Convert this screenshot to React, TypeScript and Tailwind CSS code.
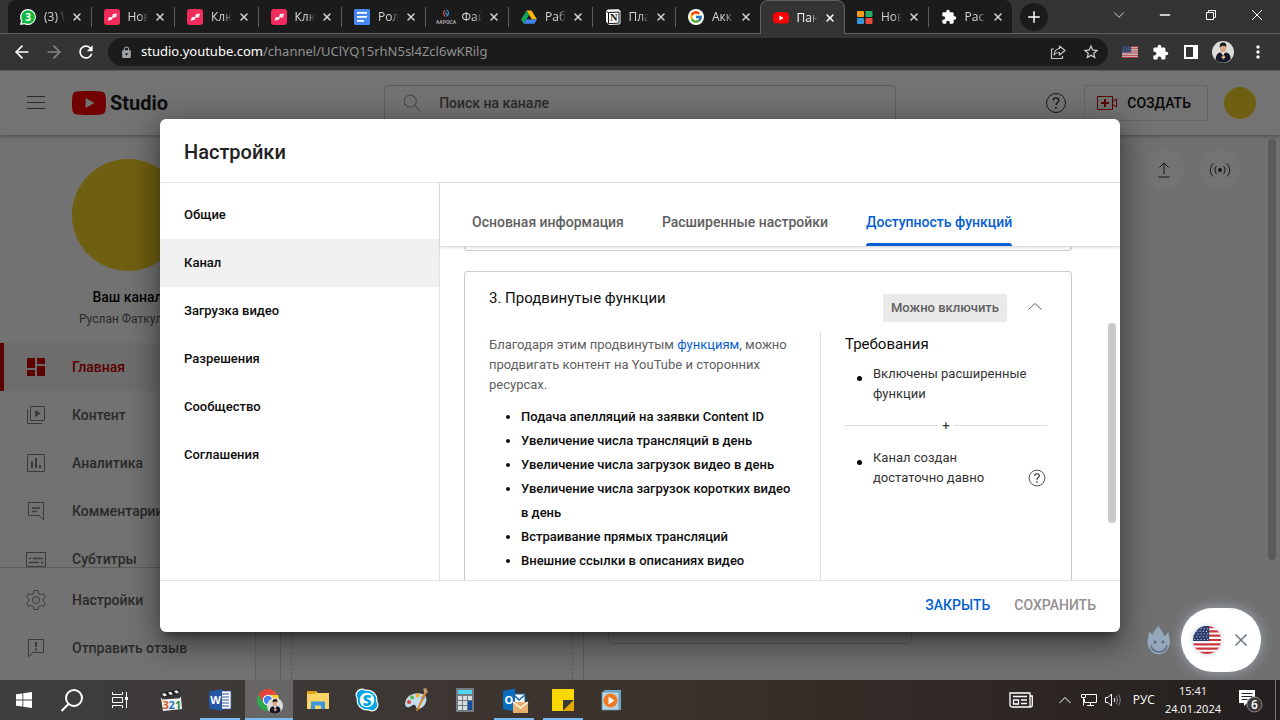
import { ReactNode } from 'react';
import { ArrowLeft, ArrowRight, ChevronDown, Minus, Plus, X } from 'lucide-react';
import { FcGoogle } from 'react-icons/fc';
import { MdExtension, MdLock, MdMoreVert, MdRefresh, MdStarBorder } from 'react-icons/md';
import clsx from 'clsx';

interface BrowserTab {
  title: string;
  icon: ReactNode;
  active?: boolean;
}

interface NavItem {
  label: string;
  icon: ReactNode;
  active?: boolean;
}

interface TaskApp {
  name: string;
  icon: ReactNode;
  running?: boolean;
  active?: boolean;
}

/* ---------- favicons ---------- */

const WhatsAppIcon = () => (
  <svg viewBox="0 0 16 16" className="size-4">
    <path d="M8 0a8 8 0 1 1-3.6 15.2L0 16l1-4.2A8 8 0 0 1 8 0z" fill="#fff" />
    <path d="M8 1.2a6.8 6.8 0 1 1-3.3 12.7l-2.9.6.7-2.8A6.8 6.8 0 0 1 8 1.2z" fill="#12b83c" />
    <text x="8" y="11.8" textAnchor="middle" fontSize="10" fontWeight="700" fontFamily="Open Sans, sans-serif" fill="#fff">3</text>
  </svg>
);

const PinkIcon = () => (
  <svg viewBox="0 0 16 16" className="size-4">
    <rect width="16" height="16" rx="3" fill="#f22b5d" />
    <path d="M3.500 11.500 5 8h3l1-3 4-.5-1 4H9l-1.500 2.500z" fill="#fff" opacity=".9" />
  </svg>
);

const DocsIcon = () => (
  <svg viewBox="0 0 16 16" className="size-4">
    <rect width="16" height="16" rx="1.5" fill="#4688f4" />
    <path d="M3 3h10v1.7H3zM3 7h10v1.7H3zM3 11h7v1.7H3z" fill="#fff" />
  </svg>
);

const RosaIcon = () => (
  <svg viewBox="0 0 16 16" className="size-4 overflow-visible">
    <path d="M7 1.500C5 2 5 6.500 7.500 7.500" stroke="#d9434d" strokeWidth="1.300" fill="none" />
    <path d="M8 1c3 .5 3.500 5 .5 6.500M7 3.500l3 3" stroke="#2c8fc9" strokeWidth="1.200" fill="none" />
    <text x="8" y="15" textAnchor="middle" fontSize="5" fontWeight="700" fontFamily="Roboto, sans-serif" fill="#a8a8a8">ААРОСА</text>
  </svg>
);

const DriveIcon = () => (
  <svg viewBox="0 0 16 16" className="size-4">
    <path d="M5.500 1.500h5L16 10.500h-5z" fill="#fbb50d" />
    <path d="M5.500 1.500 8.200 6 2.700 14.800 0 10.500z" fill="#12a15b" />
    <path d="M5.300 10.500H16l-2.700 4.300H2.700z" fill="#4285f4" />
  </svg>
);

const NotionIcon = () => (
  <svg viewBox="0 0 16 16" className="size-4">
    <path d="M1 2 3 .6l10.500-.3L15.500 2v12l-1.200 1.600L4 16l-3-3.500z" fill="#fff" />
    <path d="M3.500 3.500 14 3v11l-10.500.7z" fill="#fff" stroke="#111" strokeWidth="1" />
    <path d="M1.500 2.500 3.500 3.800" stroke="#111" />
    <text x="8.800" y="12.300" textAnchor="middle" fontSize="10" fontWeight="700" fontFamily="Liberation Serif, serif" fill="#111">N</text>
  </svg>
);

const YouTubeIcon = ({ className = 'h-4 w-4' }: { className?: string }) => (
  <svg viewBox="0 0 34 24" className={className}>
    <path d="M33.300 3.800A4.300 4.300 0 0 0 30.300.8C27.600 0 17 0 17 0S6.400 0 3.700.8A4.300 4.300 0 0 0 .7 3.800C0 6.400 0 12 0 12s0 5.600.7 8.200c.4 1.500 1.500 2.600 3 3C6.400 24 17 24 17 24s10.600 0 13.300-.8a4.300 4.300 0 0 0 3-3C34 17.600 34 12 34 12s0-5.600-.7-8.200z" fill="#f00" />
    <path d="M13.600 17.100 22.400 12l-8.800-5.100z" fill="#fff" />
  </svg>
);

const SquaresIcon = () => (
  <svg viewBox="0 0 16 16" className="size-4">
    <rect x="0" y="2" width="7" height="6" rx="1" fill="#f59b1a" />
    <rect x="8.500" y="2" width="7" height="6" rx="1" fill="#27ae60" />
    <rect x="0" y="9" width="7" height="6" rx="1" fill="#3498db" />
    <rect x="8.500" y="9" width="7" height="6" rx="1" fill="#e74c3c" />
  </svg>
);

const Person = ({ className }: { className: string }) => (
  <svg viewBox="0 0 22 22" className={className}>
    <circle cx="11" cy="11" r="11" fill="#dcdcda" />
    <path d="M4 21c-1-5 1-9 4-9.500L11 13l3-1.500c4 .5 5 4.500 4.500 7A11 11 0 0 1 4 19.500z" fill="#161a28" />
    <path d="M9.500 11.500h3L11 15z" fill="#fff" />
    <ellipse cx="11" cy="7.500" rx="3" ry="4" fill="#d9a98a" />
    <path d="M7.800 6.500C7.500 2.500 9 1.500 11.500 1.500c2.500 0 3.200 2.300 2.700 5-.5-2-4-2.500-6.400 0z" fill="#1d1a1a" />
    <path d="m9 16 3-2 1.500 2-2 2.500z" fill="#d9a98a" />
  </svg>
);

/* ---------- studio icons ---------- */

const Line = ({ children, className = 'size-6' }: { children: ReactNode; className?: string }) => (
  <svg viewBox="0 0 24 24" className={className} fill="none" stroke="currentColor" strokeWidth="1">
    {children}
  </svg>
);

const HelpIcon = ({ className }: { className?: string }) => (
  <Line className={className}>
    <circle cx="12" cy="12" r="9.500" />
    <path d="M9.200 9.600c0-1.600 1.200-2.700 2.800-2.700s2.800 1.100 2.800 2.500c0 2-2.800 2.200-2.800 4.600" strokeWidth="1.400" />
    <path d="M12 16v1.700" strokeWidth="1.600" />
  </Line>
);

const navItems: NavItem[] = [
  {
    label: 'Главная',
    active: true,
    icon: (
      <svg viewBox="0 0 24 24" className="size-6" fill="currentColor">
        <path d="M3 3h8v10H3zM13 3h8v6h-8zM13 11h8v10h-8zM3 15h8v6H3z" />
      </svg>
    ),
  },
  {
    label: 'Контент',
    icon: (
      <Line>
        <path d="M6.500 3.500h14v14h-14zM3.500 6v14.500H18" />
        <path d="m11 7 6 3.500-6 3.500z" fill="currentColor" stroke="none" />
      </Line>
    ),
  },
  {
    label: 'Аналитика',
    icon: (
      <Line>
        <path d="M3.500 3.500h17v17h-17z" />
        <path d="M8 10v7M12 7v10M16 14v3" strokeWidth="2" />
      </Line>
    ),
  },
  {
    label: 'Комментарии',
    icon: (
      <Line>
        <path d="M4.500 3.500h15v17.300l-4.500-4.300H4.500z" />
        <path d="M8 9h8M8 12.500h5" strokeWidth="1.500" />
      </Line>
    ),
  },
  {
    label: 'Субтитры',
    icon: (
      <Line>
        <path d="M2.500 5.500h19v14h-19z" />
        <path d="M5 11.500h2M9 11.500h10M5 15.500h10M17 15.500h2" strokeWidth="1.500" />
      </Line>
    ),
  },
];

const footerItems: NavItem[] = [
  {
    label: 'Настройки',
    icon: (
      <Line>
        <circle cx="12" cy="12" r="3.500" />
        <path d="m10 2.500-.6 2.900-2 1.200-2.800-1L2.500 9l2.200 2v2l-2.200 2 2.100 3.500 2.800-1 2 1.200.6 2.800h4l.6-2.800 2-1.200 2.800 1 2.100-3.500-2.200-2v-2l2.200-2-2.100-3.400-2.800 1-2-1.200-.6-2.900z" strokeLinejoin="round" />
      </Line>
    ),
  },
  {
    label: 'Отправить отзыв',
    icon: (
      <Line>
        <path d="M4.500 20.800V3.500h15v13H9z" />
        <path d="M12 6v5M12 12.500v2" strokeWidth="2" />
      </Line>
    ),
  },
];

/* ---------- data ---------- */

const browserTabs: BrowserTab[] = [
  { title: '(3) W', icon: <WhatsAppIcon /> },
  { title: 'Нов', icon: <PinkIcon /> },
  { title: 'Клю', icon: <PinkIcon /> },
  { title: 'Клю', icon: <PinkIcon /> },
  { title: 'Рол', icon: <DocsIcon /> },
  { title: 'Фай', icon: <RosaIcon /> },
  { title: 'Раб', icon: <DriveIcon /> },
  { title: 'Пла', icon: <NotionIcon /> },
  { title: 'Акк', icon: <span className="block rounded-full bg-white p-px"><FcGoogle size={14} /></span> },
  { title: 'Пан', icon: <YouTubeIcon />, active: true },
  { title: 'Нов', icon: <SquaresIcon /> },
  { title: 'Рас', icon: <MdExtension size={16} color="#fff" /> },
];

const menu = ['Общие', 'Канал', 'Загрузка видео', 'Разрешения', 'Сообщество', 'Соглашения'];
const sections = ['Основная информация', 'Расширенные настройки', 'Доступность функций'];

const features = [
  'Подача апелляций на заявки Content ID',
  'Увеличение числа трансляций в день',
  'Увеличение числа загрузок видео в день',
  'Увеличение числа загрузок коротких видео в день',
  'Встраивание прямых трансляций',
  'Внешние ссылки в описаниях видео',
];

const Flag = ({ className, ratio = 'xMidYMid slice' }: { className: string; ratio?: string }) => (
  <svg viewBox="0 0 28 26" preserveAspectRatio={ratio} className={className}>
    <rect width="28" height="26" fill="#fff" />
    <path d="M0 1h28M0 5h28M0 9h28M0 13h28M0 17h28M0 21h28M0 25h28" stroke="#c8363f" strokeWidth="2" />
    <rect width="16" height="14" fill="#2b3c6f" />
    <path d="M2 2.500h13M1 5h13M2 7.500h13M1 10h13M2 12.500h13" stroke="#c9d2e6" strokeWidth="1" strokeDasharray="1 2" />
  </svg>
);

/* ---------- taskbar icons ---------- */

const apps: TaskApp[] = [
  {
    name: 'Media Player Classic',
    icon: (
      <svg viewBox="0 0 24 24" className="size-6">
        <path d="m2 5 18-4 .8 4.500L3 10z" fill="#222" />
        <path d="m3 6 3-1 2 2.500-3 1zM9 4.500l3-.7 2 2.500-3 .8zM15 3l3-.8 2 2.500-3 .8z" fill="#eee" />
        <path d="m2 10 20-1 1 12-19 2z" fill="#f3f3f3" />
        <path d="m3 9 18-.8v2L3 11.500z" fill="#333" />
        <text x="3.500" y="20.500" fontSize="11" fontWeight="700" fontFamily="Open Sans, sans-serif" fill="#d9531e">3</text>
        <text x="9.500" y="20.500" fontSize="11" fontWeight="700" fontFamily="Open Sans, sans-serif" fill="#2476c3">2</text>
        <text x="16" y="20.500" fontSize="11" fontWeight="700" fontFamily="Open Sans, sans-serif" fill="#2d8a3a">1</text>
      </svg>
    ),
  },
  {
    name: 'Word',
    running: true,
    icon: (
      <svg viewBox="0 0 24 24" className="size-6">
        <path d="M12 3h11v18H12z" fill="#fff" stroke="#2b579a" strokeWidth=".8" />
        <path d="M14 6h7M14 9h7M14 12h7M14 15h7M14 18h7" stroke="#2b579a" strokeWidth="1.200" />
        <path d="M1 3.500 14 1v22L1 20.500z" fill="#2456a4" />
        <text x="7.500" y="16" textAnchor="middle" fontSize="11" fontWeight="700" fontFamily="Open Sans, sans-serif" fill="#fff">W</text>
      </svg>
    ),
  },
  {
    name: 'Chrome',
    running: true,
    active: true,
    icon: (
      <svg viewBox="0 0 24 24" className="size-6 overflow-visible">
        <circle cx="11" cy="12" r="11" fill="#2da94f" />
        <path d="M11 12 1.500 6.500A11 11 0 0 1 20.500 6.500L11 7z" fill="#e8453c" />
        <path d="M11 12 1.500 6.500 6 14z" fill="#e8453c" />
        <path d="M11 7h9.800A11 11 0 0 1 11 23l5-8z" fill="#fcc934" />
        <circle cx="11" cy="12" r="5.200" fill="#fff" />
        <circle cx="11" cy="12" r="4.200" fill="#4285f4" />
        <svg x="10" y="10" width="16" height="16"><Person className="size-4" /></svg>
      </svg>
    ),
  },
  {
    name: 'Проводник',
    icon: (
      <svg viewBox="0 0 24 24" className="size-6">
        <path d="M1 3h9l1.500 2H23v16H1z" fill="#fbd467" />
        <path d="M1 3h9v3H1z" fill="#e3a21a" />
        <path d="M5 21v-7.500h14V21h-4v-3.500H9V21z" fill="#3b97dd" />
      </svg>
    ),
  },
  {
    name: 'Skype',
    icon: (
      <svg viewBox="0 0 24 24" className="size-6">
        <circle cx="7" cy="7" r="6.500" fill="#fff" />
        <circle cx="17" cy="17" r="6.500" fill="#fff" />
        <circle cx="12" cy="12" r="10.500" fill="#fff" />
        <circle cx="7.200" cy="7.200" r="5.400" fill="#00a5e5" />
        <circle cx="16.800" cy="16.800" r="5.400" fill="#00a5e5" />
        <circle cx="12" cy="12" r="9.300" fill="#00a5e5" />
        <circle cx="12" cy="12" r="7.300" fill="#fff" />
        <text x="12" y="17.500" textAnchor="middle" fontSize="15" fontWeight="800" fontFamily="Open Sans, sans-serif" fill="#00a5e5">S</text>
      </svg>
    ),
  },
  {
    name: 'Paint',
    icon: (
      <svg viewBox="0 0 24 24" className="size-6">
        <path d="M3 10C8 4 19 4 22 9c2 5-3 12-8 12-3 0-1-5-5-4-2 .6-3 3-6 2-3-1-2-6 0-9z" fill="#c3dcec" />
        <circle cx="5" cy="14" r="2" fill="#d9403a" />
        <circle cx="8" cy="9.500" r="2" fill="#5bb947" />
        <circle cx="13.500" cy="7.500" r="2" fill="#f4b223" />
        <circle cx="19" cy="10" r="1.800" fill="#3a8bd0" />
        <path d="M21 3.500 12.500 23l1.500-1.500L22 5z" fill="#d9822b" stroke="#d9822b" />
        <path d="m19 1 3-1 2 4-3 2z" fill="#c49a6c" />
      </svg>
    ),
  },
  {
    name: 'Калькулятор',
    icon: (
      <svg viewBox="0 0 24 24" className="size-6">
        <rect x="3" y="0" width="18" height="24" fill="#737a80" />
        <rect x="5" y="2" width="14" height="4" fill="#4fd6f7" />
        <path d="M5 8h4v4H5zM10 8h4v4h-4zM15 8h4v4h-4zM5 13h4v4H5zM10 13h4v4h-4zM5 18h4v4H5zM10 18h4v4h-4z" fill="#d8dde2" />
        <path d="M15 13h4v9h-4z" fill="#124f9c" />
      </svg>
    ),
  },
  {
    name: 'Outlook',
    running: true,
    icon: (
      <svg viewBox="0 0 24 24" className="size-6 overflow-visible">
        <path d="M12 6h11v12H12z" fill="#fff" stroke="#0a64ad" />
        <path d="m12 7 5 5 6-5" fill="none" stroke="#0a64ad" strokeWidth="1.500" />
        <path d="M1 3 13 .5v23L1 21z" fill="#0a6cbd" />
        <text x="7" y="16" textAnchor="middle" fontSize="11" fontWeight="700" fontFamily="Open Sans, sans-serif" fill="#fff">O</text>
        <rect x="11" y="14" width="15" height="11" fill="#e9b06d" />
        <path d="m11 14 7.500 6 7.500-6" fill="none" stroke="#fff" strokeWidth="1.300" />
      </svg>
    ),
  },
  {
    name: 'Записки',
    running: true,
    icon: (
      <svg viewBox="0 0 24 24" className="size-6">
        <path d="M1 1h22v22H1z" fill="#fdd800" />
        <path d="M12 12h11L12 23z" fill="#3c3a38" />
        <path d="M12 23 23 12v11z" fill="#e5a900" />
      </svg>
    ),
  },
  {
    name: 'Видео',
    icon: (
      <svg viewBox="0 0 24 24" className="size-6">
        <path d="M4 2h17v20H4z" fill="#6fa9c9" />
        <path d="M2 4h17v18H2z" fill="#b5d6e8" stroke="#6d8fa3" strokeWidth=".8" />
        <circle cx="10.500" cy="12.500" r="7" fill="#f07a22" />
        <path d="m8.500 8.500 6 4-6 4z" fill="#fff" />
      </svg>
    ),
  },
];

/* ---------- browser ---------- */

function TabStrip() {
  return (
    <div className="flex h-[34px] shrink-0 border-b border-[#606060] bg-[#343434] pl-2 font-['Open_Sans',sans-serif] text-xs">
      <div className="flex min-w-0 flex-1 rounded-tr-lg bg-[#1b1b1b] rounded-tl-lg">
        {browserTabs.map((tab, i) => (
          <div
            key={i}
            className={clsx(
              'flex min-w-0 flex-1 items-center rounded-t-lg pl-3 pr-2',
              tab.active ? '-mb-px border border-b-0 border-[#606060] bg-[#343434] text-white' : 'text-[#d6d6d6]',
            )}
          >
            <span className="shrink-0">{tab.icon}</span>
            <button className="ml-2 h-4 min-w-0 flex-1 overflow-hidden whitespace-nowrap text-left leading-4 [mask-image:linear-gradient(90deg,#000_60%,transparent)]">
              {tab.title}
            </button>
            <button aria-label="Закрыть вкладку" className="ml-1.5 shrink-0">
              <X size={12} strokeWidth={3} />
            </button>
            {!tab.active && i !== 8 && i < 11 && <span className="-mr-2 ml-2 h-5 w-px shrink-0 bg-[#5c5c5c]" />}
          </div>
        ))}
      </div>
      <div className="flex w-[268px] shrink-0 items-center text-white">
        <button aria-label="Новая вкладка" className="ml-2 flex size-7 items-center justify-center rounded-full bg-[#1b1b1b]">
          <Plus size={18} strokeWidth={2} />
        </button>
        <div className="mb-1 ml-auto flex">
          <button aria-label="Поиск вкладок" className="flex w-[46px] justify-center"><ChevronDown size={18} strokeWidth={1} /></button>
          <button aria-label="Свернуть" className="flex w-[46px] items-center justify-center"><Minus size={16} strokeWidth={2} /></button>
          <button aria-label="Восстановить" className="flex w-[46px] items-center justify-center">
            <svg viewBox="0 0 12 12" className="size-3" fill="none" stroke="currentColor">
              <path d="M1.500 3.500h7v7h-7zM3.500 3.500v-2h7v7h-2" />
            </svg>
          </button>
          <button aria-label="Закрыть" className="flex w-[46px] items-center justify-center">
            <svg viewBox="0 0 12 12" className="size-3" stroke="currentColor"><path d="m1 1 10 10M11 1 1 11" /></svg>
          </button>
        </div>
      </div>
    </div>
  );
}

function Toolbar() {
  return (
    <div className="flex h-9 shrink-0 items-center bg-[#343434] text-white">
      <div className="flex w-[108px] shrink-0 items-center gap-3 pl-3">
        <button aria-label="Назад"><ArrowLeft size={20} strokeWidth={2} /></button>
        <button aria-label="Вперёд" className="text-[#858585]"><ArrowRight size={20} strokeWidth={2} /></button>
        <button aria-label="Обновить"><MdRefresh size={20} /></button>
      </div>
      <div className="flex h-7 min-w-0 flex-1 items-center rounded-full bg-[#1b1b1b] pl-3 pr-1">
        <MdLock size={13} color="#a0a4a9" />
        <a href="#" className="ml-2 flex-1 font-['Noto_Sans',sans-serif] text-[13px] text-[#919191]">
          <span className="text-white">studio.youtube.com</span>/channel/UClYQ15rhN5sl4Zcl6wKRilg
        </a>
        <button aria-label="Поделиться">
          <svg viewBox="0 0 16 16" className="size-4" fill="none" stroke="#c4c4c4" strokeWidth="1.200">
            <path d="M4 5H1.500v9.500h11V12M9.500 2l5.500 4.500L9.500 11V8.500C7 8.500 5.500 9 4 11c.3-3.500 2-6 5.500-6.500z" strokeLinejoin="round" />
          </svg>
        </button>
        <button aria-label="Закладка" className="ml-4 mr-1"><MdStarBorder size={18} color="#d0d0d0" /></button>
      </div>
      <div className="flex w-[172px] shrink-0 items-center justify-between pl-3.5 pr-3">
        <Flag className="h-3 w-4 opacity-80" ratio="none" />
        <button aria-label="Расширения"><MdExtension size={17} /></button>
        <button aria-label="Боковая панель">
          <svg viewBox="0 0 14 14" className="size-3.5"><path d="M0 0h14v14H0zM2 2v10h7V2z" fill="#fff" fillRule="evenodd" /></svg>
        </button>
        <button aria-label="Профиль"><Person className="size-[22px]" /></button>
        <button aria-label="Меню"><MdMoreVert size={20} /></button>
      </div>
    </div>
  );
}

/* ---------- studio page ---------- */

function StudioHeader() {
  return (
    <header className="relative flex h-[65px] shrink-0 items-center border-t border-[#d0d0d0] bg-white px-6 text-[#606060] shadow-[0_1px_4px_rgba(0,0,0,0.35)]">
      <button aria-label="Меню">
        <Line><path d="M3 5.500h18M3 11.500h18M3 17.500h18" /></Line>
      </button>
      <a href="#" className="ml-6 flex items-center gap-1 text-[#212121]">
        <YouTubeIcon className="h-6 w-[34px]" />
        <span className="text-xl font-bold leading-6">Studio</span>
      </a>
      <div className="absolute left-1/2 top-3.5 flex h-9 w-[512px] -translate-x-1/2 items-center rounded-sm border border-[#ccc] pl-4">
        <svg viewBox="0 0 24 24" className="size-6 text-[#aaa]" fill="none" stroke="currentColor" strokeWidth="1.200">
          <circle cx="10" cy="10" r="6.500" /><path d="m15 15 6 6" />
        </svg>
        <input aria-label="Поиск на канале" placeholder="Поиск на канале" className="ml-4 w-full bg-transparent text-sm font-medium placeholder:text-[#606060] focus:outline-none" />
      </div>
      <div className="ml-auto flex items-center">
        <button aria-label="Справка" className="text-[#333]"><HelpIcon className="size-6" /></button>
        <button className="ml-4 flex h-9 items-center border border-[#e0e0e0] pl-2.5 pr-4 text-sm font-medium text-[#111]">
          <svg viewBox="0 0 24 24" className="mr-2 size-6 text-[#c00]" fill="none" stroke="currentColor">
            <path d="M2.500 5.500h15v13h-15zM17.500 10.500l4-2.500v8l-4-2.500" />
            <path d="M10 8v8M6 12h8" strokeWidth="2" />
          </svg>
          СОЗДАТЬ
        </button>
        <button aria-label="Аккаунт" className="ml-4 size-8 rounded-full bg-[#f6d526]" />
      </div>
    </header>
  );
}

function NavLink({ item }: { item: NavItem }) {
  return (
    <a
      href="#"
      className={clsx(
        'flex h-12 shrink-0 items-center gap-6 border-l-4 pl-5 text-sm font-medium',
        item.active ? 'border-[#c00] bg-[#f1f1f1] text-[#c00]' : 'border-transparent text-[#606060]',
      )}
    >
      <span className={item.active ? '' : 'text-[#808080]'}>{item.icon}</span>
      {item.label}
    </a>
  );
}

function StudioPage() {
  return (
    <div className="flex h-full flex-col bg-[#f9f9f9]">
      <StudioHeader />
      <div className="flex min-h-0 flex-1">
        <nav className="flex w-64 shrink-0 flex-col border-r border-[#ddd] bg-[#fcfcfc]">
          <div className="flex min-h-0 flex-1 flex-col overflow-hidden">
            <div className="flex shrink-0 flex-col items-center pb-3.5 pt-6">
              <div className="size-28 rounded-full bg-[#f6d526]" />
              <div className="mt-4 text-sm font-medium leading-5 text-[#0d0d0d]">Ваш канал</div>
              <div className="mt-0.5 text-xs leading-5 text-[#606060]">Руслан Фаткулин</div>
            </div>
            {navItems.map((item) => <NavLink key={item.label} item={item} />)}
          </div>
          <div className="shrink-0 border-t border-[#ccc] py-2">
            {footerItems.map((item) => <NavLink key={item.label} item={item} />)}
          </div>
        </nav>
        <main className="relative flex min-w-0 flex-1 flex-col overflow-hidden pl-6 pt-[15px] text-[#333]">
          <div className="flex shrink-0 justify-end gap-4 pr-10">
            <button aria-label="Загрузить видео" className="flex size-10 items-center justify-center rounded-full bg-white">
              <Line><path d="M6.500 19h11M12 16V5M7.500 9.500 12 5l4.500 4.500" /></Line>
            </button>
            <button aria-label="Начать трансляцию" className="flex size-10 items-center justify-center rounded-full bg-white">
              <Line>
                <circle cx="12" cy="12" r="2" fill="currentColor" stroke="none" />
                <path d="M8.500 8a6 6 0 0 0 0 8M15.500 8a6 6 0 0 1 0 8M5 5.500c-3.500 4-3.500 9 0 13M19 5.500c3.500 4 3.500 9 0 13" />
              </Line>
            </button>
          </div>
          <div className="flex min-h-0 flex-1 items-start gap-6 pt-6">
            <div className="h-full w-76 border-x border-t border-[#d5d5d5] px-2.5 pt-4">
              <div className="h-full border-x border-dashed border-[#ccc]" />
            </div>
            <div className="h-[430px] w-76 rounded border border-[#d5d5d5]" />
          </div>
          <div className="absolute right-1 top-1 h-[421px] w-2 rounded-full bg-[#c8c8c8]" />
        </main>
      </div>
    </div>
  );
}

/* ---------- settings dialog ---------- */

function AdvancedFeatures() {
  return (
    <section className="mt-5 flex flex-1 flex-col rounded-t border border-b-0 border-[#ccc] px-6">
      <div className="flex h-[60px] shrink-0 items-center text-[#0d0d0d]">
        <h3 className="mb-2 flex-1 text-[15px] leading-6">3. Продвинутые функции</h3>
        <button className="mt-3 h-7 bg-[#e9e9e9] px-2 text-[13px] font-medium text-[#606060]">Можно включить</button>
        <button aria-label="Свернуть" className="ml-4 mt-2 text-[#606060]">
          <Line><path d="m5.500 15.500 6.500-6 6.500 6" /></Line>
        </button>
      </div>
      <div className="flex flex-1">
        <div className="flex-1 pr-6 text-[13px] text-[#0d0d0d]">
          <p className="mt-[3px] leading-5 text-[#606060]">
            Благодаря этим продвинутым <a href="#" className="text-[#065fd4]">функциям</a>, можно
            продвигать контент на YouTube и сторонних ресурсах.
          </p>
          <ul className="mt-2.5 list-disc pl-8 font-medium leading-6">
            {features.map((feature) => <li key={feature}>{feature}</li>)}
          </ul>
        </div>
        <div className="w-[227px] shrink-0 border-l border-[#ddd] pl-6 text-[13px] leading-5 text-[#333]">
          <h4 className="text-[15px] leading-6 text-[#0d0d0d]">Требования</h4>
          <div className="mt-2 flex">
            <span className="ml-3 mr-[11px] mt-3 size-[5px] shrink-0 rounded-full bg-black" />
            <span>Включены расширенные функции</span>
          </div>
          <div className="my-3 flex items-center gap-1">
            <span className="h-px flex-1 bg-[#ddd]" />
            <span>+</span>
            <span className="h-px flex-1 bg-[#ddd]" />
          </div>
          <div className="flex">
            <span className="ml-3 mr-[11px] mt-3 size-[5px] shrink-0 rounded-full bg-black" />
            <span className="flex-1 pr-4">Канал создан достаточно давно</span>
            <button aria-label="Подробнее" className="mt-5"><HelpIcon className="size-5" /></button>
          </div>
        </div>
      </div>
    </section>
  );
}

function SettingsDialog() {
  return (
    <div
      role="dialog"
      aria-label="Настройки"
      className="flex h-[513px] w-3/4 flex-col overflow-hidden rounded-md bg-white shadow-[0_16px_24px_2px_rgba(0,0,0,0.14),0_6px_30px_5px_rgba(0,0,0,0.3),0_8px_10px_-5px_rgba(0,0,0,0.4)]"
    >
      <div className="flex h-16 shrink-0 items-center border-b border-[#e3e3e3] px-6 pt-1">
        <h2 className="text-xl font-medium text-[#212121]">Настройки</h2>
      </div>
      <div className="flex min-h-0 flex-1">
        <div className="flex w-70 shrink-0 flex-col border-r border-[#e3e3e3] pt-2">
          {menu.map((label) => (
            <button
              key={label}
              className={clsx(
                'h-12 px-6 text-left text-[13px] font-medium text-[#0d0d0d]',
                label === 'Канал' && 'bg-[#f0f0f0]',
              )}
            >
              {label}
            </button>
          ))}
        </div>
        <div className="relative flex min-w-0 flex-1 flex-col">
          <div className="z-10 flex shrink-0 gap-[38px] border-b border-[#ddd] pl-8 pt-4 shadow-[0_1px_3px_rgba(0,0,0,0.12)]">
            {sections.map((label, i) => (
              <button
                key={label}
                className={clsx(
                  'relative h-[47px] text-sm font-medium',
                  i === 2 ? 'text-[#065fd4]' : 'text-[#606060]',
                )}
              >
                {label}
                {i === 2 && <span className="absolute inset-x-0 bottom-0 h-[3px] rounded-t-sm bg-[#065fd4]" />}
              </button>
            ))}
          </div>
          <div className="flex min-h-0 flex-1 flex-col overflow-hidden pl-6 pr-12">
            <div className="h-1 shrink-0 rounded-b border border-t-0 border-[#ccc]" />
            <AdvancedFeatures />
          </div>
          <div className="absolute right-1 top-[140px] h-[200px] w-2 rounded-full bg-[#c9c9c9]" />
        </div>
      </div>
      <div className="flex h-[52px] shrink-0 items-center justify-end gap-6 border-t border-[#e3e3e3] px-6 pb-0.5 text-sm font-medium">
        <button className="text-[#065fd4]">ЗАКРЫТЬ</button>
        <button className="text-[#909090]">СОХРАНИТЬ</button>
      </div>
    </div>
  );
}

function ProxyWidget() {
  return (
    <div className="absolute bottom-2 right-[19px] flex items-center gap-2.5">
      <svg viewBox="0 0 24 31" className="h-[31px] w-6">
        <path d="M11.500 0c.5 4 5 6 5.500 11 1.500-.5 3-2 4.500-4.500 0 4 1.500 7 1.500 11.500A11.300 12.300 0 0 1 .5 18C.5 13.500 2 10 2 6.500 3.500 8 4.500 9 6 9.500 6 6 10 4 11.500 0z" fill="#93a8bc" />
        <circle cx="8" cy="17" r="1.600" fill="#5f6b78" />
        <circle cx="16" cy="17" r="1.600" fill="#5f6b78" />
        <path d="M4 20.500c2 8.500 14 8.500 16 0" fill="none" stroke="#5f6b78" strokeWidth="1.500" />
      </svg>
      <div className="flex h-16 w-20 items-center gap-2.5 rounded-[32px] bg-white pl-3 shadow-[0_0_12px_rgba(200,215,235,0.6)]">
        <Flag className="size-7 rounded-full shadow-[0_0_5px_rgba(80,110,150,0.35)]" />
        <button aria-label="Скрыть" className="text-[#6d7a89]"><X size={20} strokeWidth={2} /></button>
      </div>
    </div>
  );
}

/* ---------- taskbar ---------- */

function Taskbar() {
  return (
    <footer className="flex h-10 shrink-0 items-stretch bg-linear-to-r from-[#3e3e3e] via-[#3c322c] to-[#241f1e] font-['Open_Sans',sans-serif] text-xs text-white">
      <button aria-label="Пуск" className="flex w-12 items-center justify-center">
        <svg viewBox="0 0 16 16" className="size-4" fill="#fff">
          <path d="M0 2.300 6.500 1.400v6.200H0zM7.300 1.300 16 0v7.600H7.300zM0 8.400h6.500v6.200L0 13.700zM7.300 8.400H16V16l-8.700-1.300z" />
        </svg>
      </button>
      <button aria-label="Поиск" className="flex w-12 items-center justify-center">
        <svg viewBox="0 0 24 24" className="size-6" fill="none" stroke="#fff" strokeWidth="2">
          <circle cx="14" cy="10" r="8" /><path d="M8.500 16 1.500 23" />
        </svg>
      </button>
      <button aria-label="Представление задач" className="flex w-12 items-center justify-center">
        <svg viewBox="0 0 16 16" className="size-4" fill="none" stroke="#fff">
          <path d="M.5 0v2.500h10V0M.5 16v-2.500h10V16M.5 5.500h10v5H.5zM14.500 0v16" />
          <path d="M13 5h3v3h-3z" fill="#fff" stroke="none" />
        </svg>
      </button>
      <div className="ml-[3px] flex gap-px">
        {apps.map((app) => (
          <button
            key={app.name}
            aria-label={app.name}
            className={clsx('relative flex w-12 items-center justify-center', app.active && 'bg-[#686665]')}
          >
            {app.icon}
            {app.running && (
              <span className={clsx('absolute bottom-0 h-0.5 bg-[#76b9f5]', app.active ? 'inset-x-0' : 'inset-x-1')} />
            )}
          </button>
        ))}
      </div>
      <div className="ml-auto flex items-center">
        <button aria-label="Новости">
          <svg viewBox="0 0 24 16" className="h-4 w-6" fill="none" stroke="#fff" strokeWidth="1.300">
            <path d="M1 1h20v14H3a2 2 0 0 1-2-2zM21 4h2.300v9a2 2 0 0 1-2 2H18M4 4.500h14M12 8h6M12 11.500h6M4.500 8h5v4h-5z" />
          </svg>
        </button>
        <button aria-label="Скрытые значки" className="ml-[26px]">
          <svg viewBox="0 0 12 12" className="size-3" fill="none" stroke="#fff"><path d="m.5 9 5.500-5.500L11.500 9" /></svg>
        </button>
        <button aria-label="Сеть" className="ml-2.5">
          <svg viewBox="0 0 16 16" className="size-4" fill="none" stroke="#fff">
            <path d="M5 2.500h10.500v8H3.500V7M9.500 10.500v3M6 13.500h7M.5 2.500h4v3h-4zM2.500 5.500v8" />
          </svg>
        </button>
        <button aria-label="Громкость" className="ml-2">
          <svg viewBox="0 0 16 16" className="size-4" fill="none" stroke="#fff">
            <path d="M.5 5.500H3l3.500-3.500v12L3 10.500H.5z" />
            <path d="M9 6c1 1.300 1 2.700 0 4" />
            <path d="M11 4c2 2.500 2 5.500 0 8M13.300 2.500c2.500 3.500 2.500 7.500 0 11" stroke="#888" />
          </svg>
        </button>
        <span className="ml-3">РУС</span>
        <div className="ml-2.5 text-center text-[11px] leading-[18px]">
          <div>15:41</div>
          <div>24.01.2024</div>
        </div>
        <button aria-label="Уведомления" className="ml-4">
          <svg viewBox="0 0 26 26" className="size-[26px]">
            <path d="M2 3h16v13h-8l-3 3v-3H2z" fill="#fff" />
            <path d="M4.500 6.500h11M4.500 9.500h11M4.500 12.500h6" stroke="#2a2423" />
            <circle cx="17.500" cy="17.500" r="7.500" fill="#3a3837" stroke="#8a8a8a" />
            <text x="17.500" y="22" textAnchor="middle" fontSize="12" fontWeight="600" fontFamily="Open Sans, sans-serif" fill="#fff">6</text>
          </svg>
        </button>
        <span className="ml-3 mr-1 h-10 w-px bg-[#777]" />
      </div>
    </footer>
  );
}

export default function App() {
  return (
    <div className="flex h-screen flex-col overflow-hidden font-['Roboto',sans-serif]">
      <TabStrip />
      <Toolbar />
      <div className="relative min-h-0 flex-1 overflow-hidden">
        <StudioPage />
        <div className="absolute inset-0 flex items-center justify-center bg-black/55">
          <SettingsDialog />
        </div>
        <ProxyWidget />
      </div>
      <Taskbar />
    </div>
  );
}
